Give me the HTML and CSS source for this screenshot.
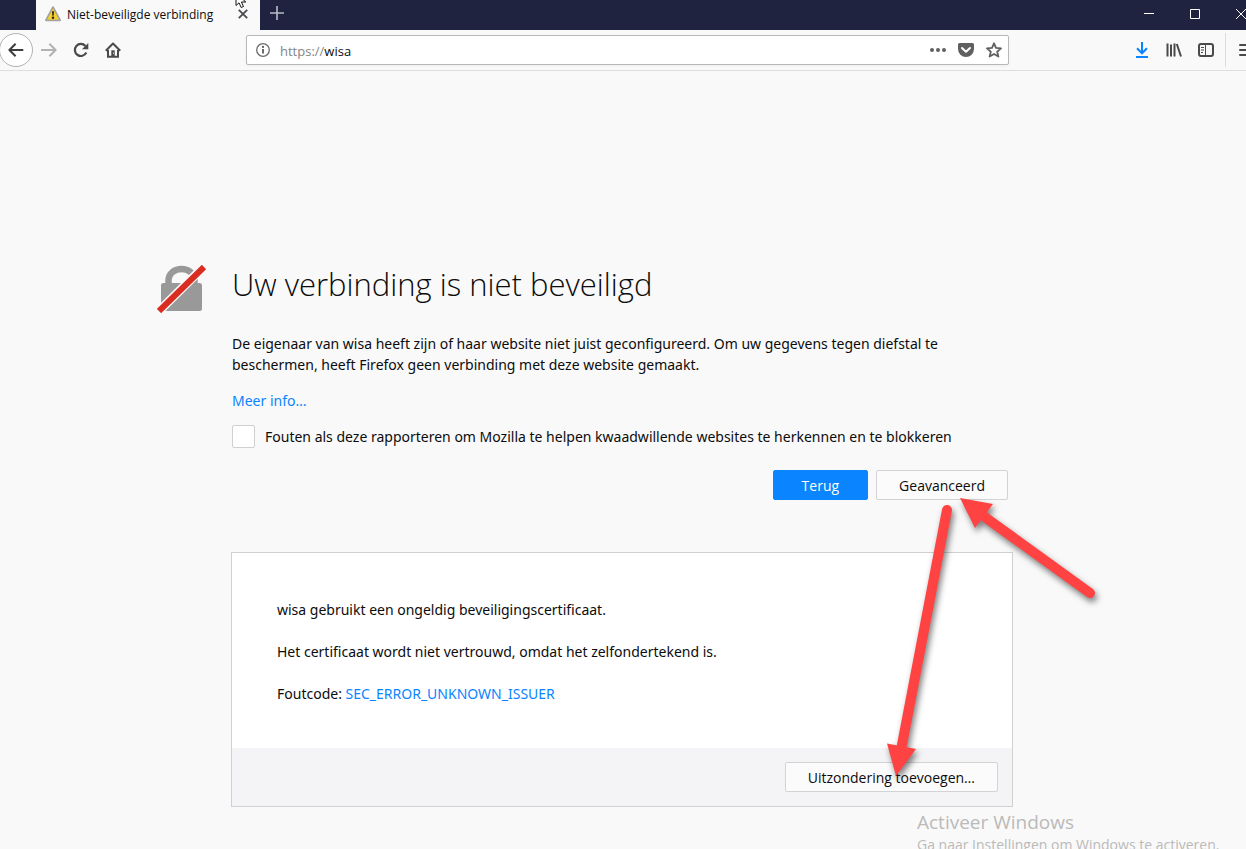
FILE: index.html
```html
<!DOCTYPE html>
<html lang="nl">
<head>
<meta charset="utf-8">
<title>Niet-beveiligde verbinding</title>
<link rel="stylesheet" href="styles.css">
</head>
<body>
<header class="browser">
  <div class="tabstrip">
    <div class="tab">
      <svg class="tab-icon" width="16" height="16" viewBox="0 0 16 16" aria-hidden="true">
        <path d="M8 1.2 15 14.2H1z" fill="#f4c51c" stroke="#a3a3a3" stroke-width="2" stroke-linejoin="round"/>
        <path d="M8 2.6 13.8 13.6H2.2z" fill="#f7cf2b"/>
        <path d="M7 5.2h2l-.4 4.6H7.4z" fill="#222"/><circle cx="8" cy="11.7" r="1.2" fill="#222"/>
      </svg>
      <span class="tab-title">Niet-beveiligde verbinding</span>
      <button class="icon-button tab-close" aria-label="Tabblad sluiten">
        <svg width="10" height="10" viewBox="0 0 10 10"><path d="M.8.8l8.400 8.400M9.200.8.8 9.200" stroke="#4a4a4f" stroke-width="1.8"/></svg>
      </button>
      <svg class="cursor" width="14" height="8" viewBox="0 0 14 8" aria-hidden="true">
        <path d="M1-7V5.500L4 2.800l2.200 4.700 2.300-1L6.400 2h4.400z" fill="#fff" stroke="#111" stroke-width="1"/>
      </svg>
    </div>
    <button class="icon-button new-tab" aria-label="Nieuw tabblad">
      <svg width="14" height="14" viewBox="0 0 14 14"><path d="M7 0v14M0 7h14" stroke="#bbbbc8" stroke-width="1.6"/></svg>
    </button>
    <div class="window-controls">
      <button class="icon-button" aria-label="Minimaliseren"><svg width="10" height="10" viewBox="0 0 10 10"><path d="M0 4.500h10" stroke="#fff"/></svg></button>
      <button class="icon-button" aria-label="Maximaliseren"><svg width="10" height="10" viewBox="0 0 10 10"><path d="M.5.5h9v9h-9z" fill="none" stroke="#fff"/></svg></button>
      <button class="icon-button" aria-label="Sluiten"><svg width="10" height="10" viewBox="0 0 10 10"><path d="M0 0l10 10M10 0 0 10" stroke="#fff"/></svg></button>
    </div>
  </div>
  <nav class="toolbar" aria-label="Navigatie">
    <button class="back" aria-label="Vorige pagina"><svg width="16" height="16" viewBox="0 0 16 16"><path d="M15.300 8H1.500M7.600 1.800 1.400 8l6.200 6.200" fill="none" stroke="#3d3d3d" stroke-width="2" stroke-linejoin="round"/></svg></button>
    <button class="icon-button tool" aria-label="Volgende pagina" disabled><svg width="16" height="16" viewBox="0 0 16 16"><path d="M0 8h14.500M8.400 1.800 14.600 8l-6.200 6.200" fill="none" stroke="#b2b2b2" stroke-width="2" stroke-linejoin="round"/></svg></button>
    <button class="icon-button tool" aria-label="Vernieuwen"><svg width="16" height="16" viewBox="0 0 16 16"><path d="M13.300 10.600A6 6 0 1 1 12.400 4" fill="none" stroke="#4a4a4a" stroke-width="2.2"/><path d="M15.300 1v6.300H9z" fill="#4a4a4a"/></svg></button>
    <button class="icon-button tool" aria-label="Startpagina"><svg width="16" height="16" viewBox="0 0 16 16"><path d="M.8 8.700 8 1.500l7.200 7.200" fill="none" stroke="#4a4a4a" stroke-width="2" stroke-linejoin="round"/><path d="M3 8v6.800h10V8" fill="none" stroke="#4a4a4a" stroke-width="2"/><path d="M6.300 14.500V8.300h3.400v6.200z" fill="#4a4a4a"/><path d="M8 11.200h1" stroke="#fff" stroke-width="1"/></svg></button>
    <div class="urlbar">
      <svg width="14" height="14" viewBox="0 0 14 14" aria-hidden="true"><circle cx="7" cy="7" r="6.3" fill="none" stroke="#6a6a6a" stroke-width="1.3"/><path d="M7 6v4.500" stroke="#5a5a5a" stroke-width="1.8"/><circle cx="7" cy="3.9" r="1.1" fill="#5a5a5a"/></svg>
      <div class="address"><span class="scheme">https://</span>wisa</div>
      <button class="icon-button" aria-label="Paginahandelingen"><svg width="16" height="16" viewBox="0 0 16 16" fill="#606060"><circle cx="2" cy="8" r="2"/><circle cx="8" cy="8" r="2"/><circle cx="14" cy="8" r="2"/></svg></button>
      <button class="icon-button" aria-label="Opslaan naar Pocket"><svg width="16" height="16" viewBox="0 0 16 16"><path d="M1.500 1h13A1.500 1.500 0 0 1 16 2.500V7a8 8 0 0 1-16 0V2.500A1.500 1.500 0 0 1 1.500 1z" fill="#606060"/><path d="M4 6l4 3.800L12 6" fill="none" stroke="#fff" stroke-width="2" stroke-linecap="round" stroke-linejoin="round"/></svg></button>
      <button class="icon-button" aria-label="Bladwijzer maken"><svg width="16" height="16" viewBox="0 0 16 16"><path d="M8 1.300l2 4.600 5 .5-3.800 3.300 1.200 4.900L8 12l-4.400 2.600 1.200-4.900L1 6.400l5-.5z" fill="none" stroke="#606060" stroke-width="1.800" stroke-linejoin="round"/></svg></button>
    </div>
    <div class="tools">
      <button class="icon-button" aria-label="Downloads"><svg width="16" height="16" viewBox="0 0 16 16"><path d="M8 0v11M3 6.300l5 5 5-5M2 15h12" fill="none" stroke="#0a84ff" stroke-width="2"/></svg></button>
      <button class="icon-button" aria-label="Bibliotheek"><svg width="16" height="16" viewBox="0 0 16 16"><path d="M1.500 1.500v13M5 2.500v12M8.500 1.500v13M10.800 2l4.200 12.500" fill="none" stroke="#4a4a4a" stroke-width="2"/></svg></button>
      <button class="icon-button" aria-label="Zijbalk"><svg width="16" height="16" viewBox="0 0 16 16"><rect x="1" y="2" width="14" height="12" rx="2" fill="none" stroke="#4a4a4a" stroke-width="2"/><path d="M7.500 2v12M3 5.500h3M3 8h3M3 10.500h2" stroke="#4a4a4a"/></svg></button>
      <button class="icon-button menu" aria-label="Menu openen"><svg width="16" height="16" viewBox="0 0 16 16"><path d="M1 3h14M1 8h14M1 13h14" stroke="#4a4a4a" stroke-width="2" stroke-linecap="round"/></svg></button>
    </div>
  </nav>
</header>

<main class="page">
  <div class="error">
    <svg class="lock" width="50" height="50" viewBox="0 0 50 50" aria-hidden="true">
      <path d="M11.500 21v-4c0-16 26-16 26 0v4" fill="none" stroke="#999" stroke-width="6.500"/>
      <rect x="4" y="19" width="41" height="28" rx="2.500" fill="#999"/>
      <path d="M1 48 48 1.500" stroke="#f9f9f9" stroke-width="9"/>
      <path d="M2 47 47 3" stroke="#d92d21" stroke-width="6"/>
    </svg>
    <div class="content">
      <h1>Uw verbinding is niet beveiligd</h1>
      <p class="description">De eigenaar van wisa heeft zijn of haar website niet juist geconfigureerd. Om uw gegevens tegen diefstal te beschermen, heeft Firefox geen verbinding met deze website gemaakt.</p>
      <p class="more"><a href="#info">Meer info…</a></p>
      <div class="report">
        <input type="checkbox" id="report">
        <label for="report">Fouten als deze rapporteren om Mozilla te helpen kwaadwillende websites te herkennen en te blokkeren</label>
      </div>
      <div class="actions">
        <button class="button primary">Terug</button>
        <button class="button">Geavanceerd</button>
      </div>
    </div>
    <section class="panel">
      <div class="details">
        <p>wisa gebruikt een ongeldig beveiligingscertificaat.</p>
        <p>Het certificaat wordt niet vertrouwd, omdat het zelfondertekend is.</p>
        <p>Foutcode: <a href="#code">SEC_ERROR_UNKNOWN_ISSUER</a></p>
      </div>
      <div class="panel-footer">
        <button class="button exception">Uitzondering toevoegen…</button>
      </div>
    </section>
  </div>
</main>

<aside class="watermark">
  <div class="watermark-title">Activeer Windows</div>
  <div class="watermark-text">Ga naar Instellingen om Windows te activeren.</div>
</aside>

<svg class="arrows" width="260" height="320" viewBox="860 480 260 320" aria-hidden="true">
  <g fill="#ff4343" stroke="#ff4343">
    <path d="M947 510 901 750" stroke-width="10" stroke-linecap="round"/>
    <path d="M896 776l-9-32.500 29 5.500z" stroke="none"/>
    <path d="M1090 593 982 515" stroke-width="10" stroke-linecap="round"/>
    <path d="M960 498l33 6-18 24z" stroke="none"/>
  </g>
</svg>
</body>
</html>
```
FILE: styles.css
```css
* {
  box-sizing: border-box;
}

body {
  position: relative;
  margin: 0;
  height: 100vh;
  overflow: hidden;
  background: #f9f9f9;
  color: #0c0c0d;
  font: 14px/21px "Noto Sans", "Open Sans", sans-serif;
}

button {
  font: inherit;
}

a {
  color: #0a84ff;
  text-decoration: none;
}

svg {
  display: block;
  flex: none;
}

.icon-button {
  display: flex;
  align-items: center;
  justify-content: center;
  flex: none;
  padding: 0;
  border: 0;
  background: none;
}

.tabstrip {
  display: flex;
  height: 30px;
  padding-left: 36px;
  background: #202340;
}

.tab {
  position: relative;
  display: flex;
  align-items: center;
  width: 224px;
  padding: 0 12px 2px 9px;
  background: #f9f9f9;
  font-family: "Open Sans", sans-serif;
  font-size: 12px;
}

.tab-title {
  flex: 1;
  margin-left: 6px;
  white-space: nowrap;
}

.cursor {
  position: absolute;
  top: 0;
  left: 199px;
}

.new-tab {
  width: 34px;
  height: 26px;
}

.window-controls {
  display: flex;
  margin: 0 -18px 2px auto;
}

.window-controls .icon-button {
  width: 46px;
}

.toolbar {
  display: flex;
  align-items: center;
  height: 41px;
  border-bottom: 1px solid #dedede;
}

.back {
  display: flex;
  align-items: center;
  justify-content: center;
  flex: none;
  width: 34px;
  height: 34px;
  margin-left: -1px;
  padding: 0;
  border: 1px solid #b1b1b1;
  border-radius: 50%;
  background: #fff;
}

.tool {
  width: 32px;
  height: 32px;
}

.urlbar {
  display: flex;
  align-items: center;
  flex: 1;
  gap: 12px;
  height: 30px;
  margin: 0 125px 0 117px;
  padding: 0 6px 0 9px;
  border: 1px solid #b8b8b8;
  border-radius: 2px;
  background: #fff;
  box-shadow: 0 1px 3px #0000000d;
}

.address {
  flex: 1;
  margin-left: -2px;
  padding-top: 2px;
  font-family: "Open Sans", sans-serif;
  font-size: 13px;
}

.scheme {
  color: #858585;
}

.tools {
  display: flex;
  gap: 16px;
  margin-right: -9px;
}

.menu {
  height: 34px;
  margin: -9px 0 -9px -5px;
  padding-left: 13px;
  border-left: 1px solid #dcdcdc;
}

.page {
  padding: 191px 24px 24px 157px;
}

.error {
  display: grid;
  grid-template-columns: 50px minmax(0, 782px);
  column-gap: 24px;
}

.content {
  padding: 0 5px 0 1px;
}

.lock {
  margin-top: 2px;
}

h1 {
  margin: 0;
  font-family: "Open Sans", sans-serif;
  font-size: 31px;
  font-weight: 300;
  line-height: 44px;
}

.description {
  margin: 27px 0 15px;
}

.more {
  margin: 0;
}

.report {
  display: flex;
  align-items: center;
  gap: 10px;
  margin-top: 14px;
}

.report input {
  appearance: none;
  width: 23px;
  height: 23px;
  margin: 0;
  border: 1px solid #d0d0d2;
  border-radius: 2px;
  background: #fff;
}

.actions {
  display: flex;
  justify-content: flex-end;
  gap: 8px;
  margin-top: 22px;
}

.button {
  height: 30px;
  padding: 0 22px;
  border: 1px solid #d3d3d6;
  border-radius: 2px;
  background: #fbfbfb;
  color: #0c0c0d;
  font-family: "Open Sans", sans-serif;
}

.primary {
  padding: 0 28px;
  border-color: #0a84ff;
  background: #0a84ff;
  color: #fff;
}

.panel {
  grid-column: 2;
  margin-top: 52px;
  border: 1px solid #d0d0d3;
  background: #fff;
}

.details {
  padding: 46px 45px 44px;
}

.details p {
  margin: 0 0 21px;
}

.details p:last-child {
  margin-bottom: 0;
}

.panel-footer {
  display: flex;
  justify-content: flex-end;
  padding: 14px;
  background: #f4f4f6;
}

.watermark {
  position: absolute;
  top: 808px;
  left: 917px;
  color: #bababa;
  font-family: "Open Sans", sans-serif;
  white-space: nowrap;
}

.watermark-title {
  font-size: 19px;
  line-height: 28px;
}

.watermark-text {
  line-height: 18px;
}

.arrows {
  position: absolute;
  top: 480px;
  left: 860px;
  pointer-events: none;
  filter: drop-shadow(2px 4px 3px #00000080);
}
```
